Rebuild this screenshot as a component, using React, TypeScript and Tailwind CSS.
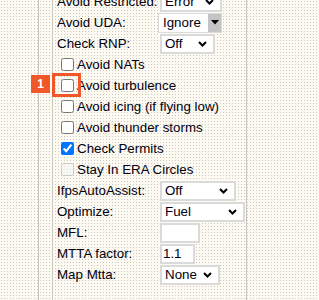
import React from "react";

function Chevron() {
  return (
    <svg width="9" height="6" viewBox="0 0 9 6" className="shrink-0">
      <path d="M1 1 L4.5 4.5 L8 1" fill="none" stroke="#000" strokeWidth="2" />
    </svg>
  );
}

function Select({ value, width }: { value: string; width: string }) {
  return (
    <div
      className={`h-[20px] ${width} flex items-center justify-between pl-[3px] pr-[6px] bg-white border-2 border-[#dadada]`}
    >
      <span>{value}</span>
      <Chevron />
    </div>
  );
}

function OldSelect({ value }: { value: string }) {
  return (
    <div className="h-[20px] w-[64px] -ml-[2px] flex items-stretch bg-white border border-[#dadada]">
      <span className="flex-1 pl-[4px] flex items-center">{value}</span>
      <div className="w-[13px] flex items-center justify-center bg-[#c4c4c4] bg-[radial-gradient(circle,#e8e8e8_0.6px,transparent_0.7px)] bg-[length:2px_2px]">
        <svg width="8" height="5" viewBox="0 0 8 5">
          <path d="M0 0 L8 0 L4 4.5 Z" fill="#000" />
        </svg>
      </div>
    </div>
  );
}

function Field({ label, children }: { label: string; children: React.ReactNode }) {
  return (
    <div className="h-[21px] flex items-center">
      <div className="w-[103px] shrink-0 whitespace-nowrap">{label}</div>
      {children}
    </div>
  );
}

function Check({ label, checked, disabled }: { label: string; checked?: boolean; disabled?: boolean }) {
  return (
    <label className="h-[21px] flex items-center whitespace-nowrap">
      <input
        type="checkbox"
        defaultChecked={checked}
        disabled={disabled}
        className="w-[13px] h-[13px] ml-[4px] mr-[3px] my-0 accent-[#0075ff]"
      />
      <span>{label}</span>
    </label>
  );
}

export default function App() {
  return (
    <div
      className="relative w-[319px] h-[300px] overflow-hidden flex text-[13.33px] text-[#000010] bg-[#fcfaf1] bg-[radial-gradient(circle,#cdc8c8_0.7px,transparent_0.8px)] bg-[length:3px_3px]"
      style={{ fontFamily: '"Liberation Sans", Arial, sans-serif' }}
    >
      <div className="w-[38px] shrink-0" />
      <div className="w-px shrink-0 bg-[#c8c4c0]" />
      <div className="w-[13px] shrink-0" />
      <div className="w-px shrink-0 bg-[#c8c4c0]" />

      <div className="w-[193px] shrink-0 pl-[4px] mt-[-9px] flex flex-col">
        <Field label="Avoid Restricted:">
          <Select value="Error" width="w-[62px]" />
        </Field>
        <Field label="Avoid UDA:">
          <OldSelect value="Ignore" />
        </Field>
        <Field label="Check RNP:">
          <Select value="Off" width="w-[55px]" />
        </Field>
        <Check label="Avoid NATs" />
        <Check label="Avoid turbulence" />
        <Check label="Avoid icing (if flying low)" />
        <Check label="Avoid thunder storms" />
        <Check label="Check Permits" checked />
        <Check label="Stay In ERA Circles" disabled />
        <Field label="IfpsAutoAssist:">
          <Select value="Off" width="w-[76px]" />
        </Field>
        <Field label="Optimize:">
          <Select value="Fuel" width="w-[85px]" />
        </Field>
        <Field label="MFL:">
          <div className="h-[20px] w-[40px] bg-white border-2 border-[#dadada]" />
        </Field>
        <Field label="MTTA factor:">
          <div className="h-[20px] w-[35px] pl-[1px] flex items-center bg-white border-2 border-[#dadada]">1.1</div>
        </Field>
        <Field label="Map Mtta:">
          <Select value="None" width="w-[60px]" />
        </Field>
      </div>
      <div className="w-px shrink-0 bg-[#c8c4c0]" />

      {/* annotation overlay */}
      <div className="absolute left-[31px] top-[75px] w-[19px] h-[18px] bg-[#f0582a] text-white font-bold text-[12px] flex items-center justify-center">
        1
      </div>
      <div className="absolute left-[52px] top-[73px] w-[29px] h-[24px] border-[3px] border-[#f0582a]" />
    </div>
  );
}
